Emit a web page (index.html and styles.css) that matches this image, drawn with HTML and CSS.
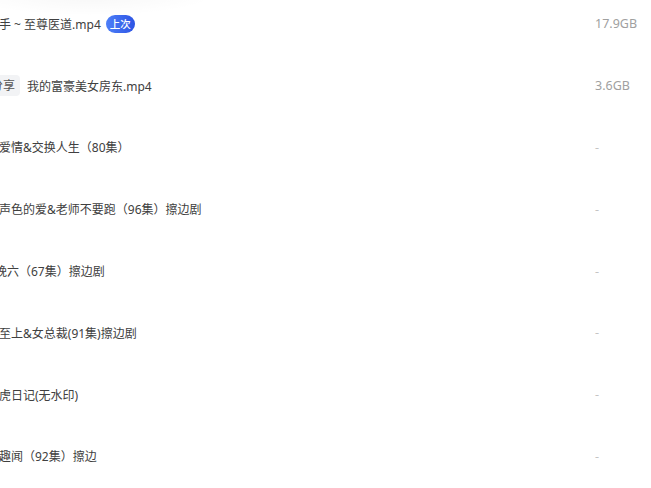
FILE: index.html
```html
<!DOCTYPE html>
<html lang="zh-CN">
  <head>
    <meta charset="utf-8">
    <title>文件列表</title>
    <link rel="stylesheet" href="styles.css">
  </head>
  <body>

  <div class="shade"></div>

  <div class="list">
    <div class="row">
      <div class="name">
        <span>手 ~ 至尊医道.mp4</span>
        <span class="badge">上次</span>
      </div>
      <div class="size">17.9GB</div>
    </div>

    <div class="row">
      <div class="name">
        <span class="tag">分享</span>
        <span>我的富豪美女房东.mp4</span>
      </div>
      <div class="size">3.6GB</div>
    </div>

    <div class="row">
      <div class="name"><span>爱情&amp;交换人生（80集）</span></div>
      <div class="size empty">-</div>
    </div>

    <div class="row">
      <div class="name"><span>声色的爱&amp;老师不要跑（96集）擦边剧</span></div>
      <div class="size empty">-</div>
    </div>

    <div class="row">
      <div class="name cut"><span>晚六（67集）擦边剧</span></div>
      <div class="size empty">-</div>
    </div>

    <div class="row">
      <div class="name"><span>至上&amp;女总裁(91集)擦边剧</span></div>
      <div class="size empty">-</div>
    </div>

    <div class="row">
      <div class="name"><span>虎日记(无水印)</span></div>
      <div class="size empty">-</div>
    </div>

    <div class="row">
      <div class="name"><span>趣闻（92集）擦边</span></div>
      <div class="size empty">-</div>
    </div>
  </div>

  </body>
</html>
```

FILE: styles.css
```css
html {
  height: 100%;
}
body {
  margin: 0;
  padding: 0;
  height: 100%;
  overflow: hidden;
  background: #ffffff;
  color: #404040;
  font-family: "Noto Sans", "Noto Sans CJK SC", sans-serif;
  font-size: 12px;
  position: relative;
}

/* faint shadow left over from the header above */
.shade {
  position: absolute;
  top: -30px;
  left: -40px;
  width: 260px;
  height: 46px;
  background: radial-gradient(ellipse at center, rgba(0,0,0,0.035), rgba(0,0,0,0) 70%);
}

.list {
  margin-top: -7px;
}

.row {
  display: flex;
  align-items: center;
  height: 61.8px;
}

.name {
  flex: 1;
  display: flex;
  align-items: center;
  gap: 5px;
  margin-left: -1px;
  white-space: nowrap;
}
.name.cut {
  margin-left: -5px;
}

.size {
  width: 56px;
  color: #a0a0a0;
  font-size: 12.5px;
}
.size.empty {
  color: #c4c4c4;
}

.tag {
  display: inline-block;
  margin-left: -14px;
  margin-right: 2px;
  padding: 3px 5px 3px 6px;
  background: #f2f3f5;
  border-radius: 4px;
  color: #555;
  font-size: 12px;
  line-height: 15px;
}

.badge {
  display: inline-block;
  height: 18px;
  line-height: 18px;
  padding: 0 4px;
  border-radius: 9px;
  background: linear-gradient(90deg, #4d7ff8, #2d54e4);
  color: #ffffff;
  font-size: 10.5px;
  font-weight: 500;
}
```
